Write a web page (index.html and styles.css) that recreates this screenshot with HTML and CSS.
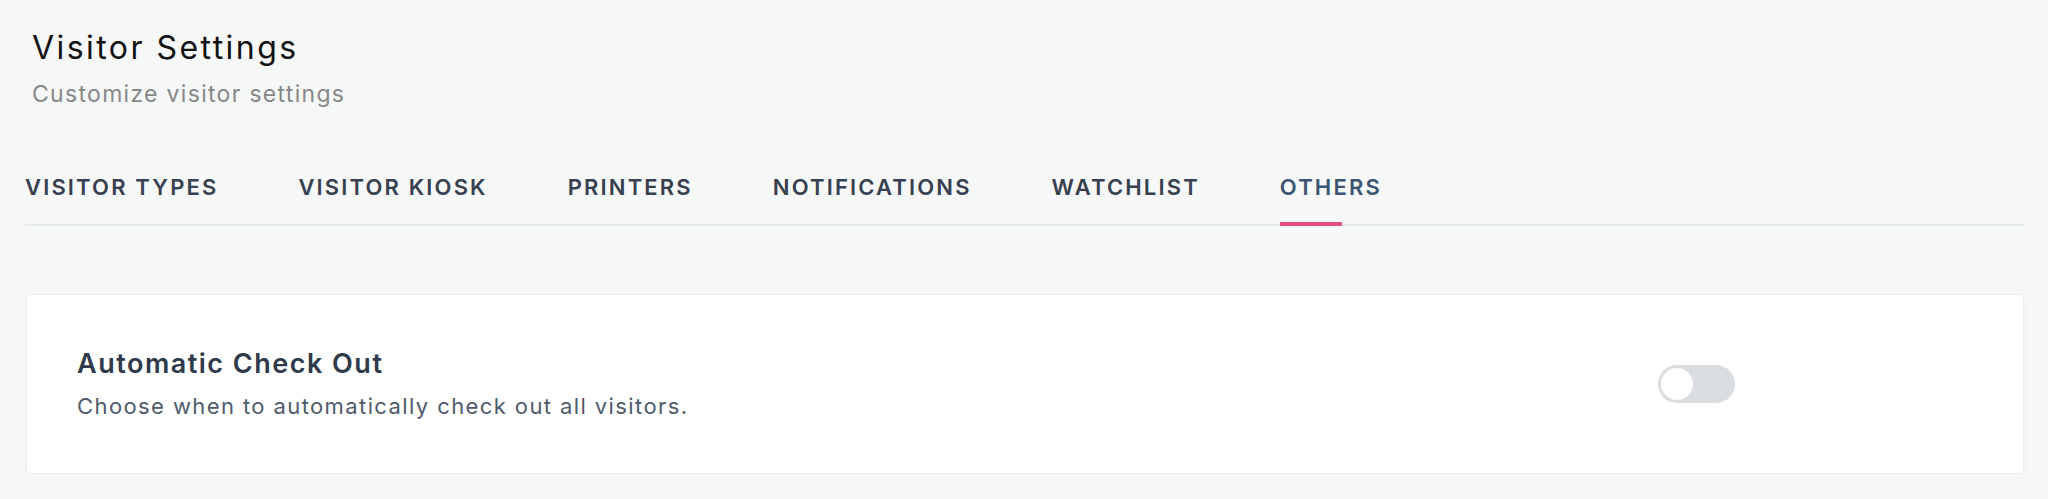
FILE: index.html
```html
<!DOCTYPE html>
<html>
<head>
    <title>Visitor Settings</title>
    <meta name="viewport" content="width=device-width, initial-scale=1">
    <link rel="stylesheet" href="styles.css">
</head>
<body>
    <div class="page">
        <div class="page-header">
            <h1>Visitor Settings</h1>
            <p class="subtitle">Customize visitor settings</p>
        </div>

        <nav class="tabs">
            <a class="tab">VISITOR TYPES</a>
            <a class="tab">VISITOR KIOSK</a>
            <a class="tab">PRINTERS</a>
            <a class="tab">NOTIFICATIONS</a>
            <a class="tab">WATCHLIST</a>
            <a class="tab active">OTHERS</a>
        </nav>

        <div class="card">
            <div class="setting-row">
                <div class="setting-text">
                    <h2>Automatic Check Out</h2>
                    <p>Choose when to automatically check out all visitors.</p>
                </div>
                <label class="switch">
                    <input type="checkbox">
                    <span class="knob"></span>
                </label>
            </div>
        </div>
    </div>
</body>
</html>
```

FILE: styles.css
```css
body {
    margin: 0;
    background: #f6f8f8;
    font-family: Inter, "Liberation Sans", sans-serif;
}
.page {
    padding: 28px 24px 0 25px;
}
.page-header {
    padding-left: 7px;
}
h1 {
    margin: 0;
    font-size: 32px;
    line-height: 39px;
    font-weight: 400;
    color: #121212;
    letter-spacing: 2.45px;
}
.subtitle {
    margin: 13px 0 0 0;
    font-size: 23px;
    line-height: 28px;
    color: #878787;
    letter-spacing: 1.3px;
}
.tabs {
    display: flex;
    gap: 80px;
    margin-top: 65px;
    border-bottom: 2px solid #e7eaea;
}
.tab {
    position: relative;
    padding-bottom: 23px;
    font-size: 22px;
    line-height: 28px;
    font-weight: 600;
    letter-spacing: 2.15px;
    color: #37404f;
    cursor: pointer;
}
.tab.active {
    color: #3b5570;
}
.tab.active::after {
    content: "";
    position: absolute;
    left: 0;
    bottom: -2px;
    width: 62px;
    height: 4px;
    background: #e4507e;
}
.card {
    margin: 68px 0 0 1px;
    height: 180px;
    box-sizing: border-box;
    padding: 0 50px;
    background: #fff;
    border: 1px solid #eceeee;
    border-radius: 4px;
    box-shadow: 0 2px 4px rgba(0, 0, 0, 0.03);
    display: flex;
    align-items: center;
}
.setting-row {
    display: flex;
    align-items: center;
    justify-content: space-between;
    width: 1658px;
}
.setting-text h2 {
    margin: 0;
    font-size: 27px;
    line-height: 32px;
    font-weight: 600;
    color: #2f3a4b;
    letter-spacing: 1.5px;
}
.setting-text p {
    margin: 12px 0 0 0;
    font-size: 22px;
    line-height: 28px;
    color: #4e5b6c;
    letter-spacing: 1.4px;
}
.switch {
    position: relative;
    display: block;
    width: 77px;
    height: 38px;
    border-radius: 19px;
    background: #dadde2;
    cursor: pointer;
}
.switch input {
    display: none;
}
.knob {
    position: absolute;
    top: 3px;
    left: 3px;
    width: 32px;
    height: 32px;
    border-radius: 50%;
    background: #fff;
}
```
